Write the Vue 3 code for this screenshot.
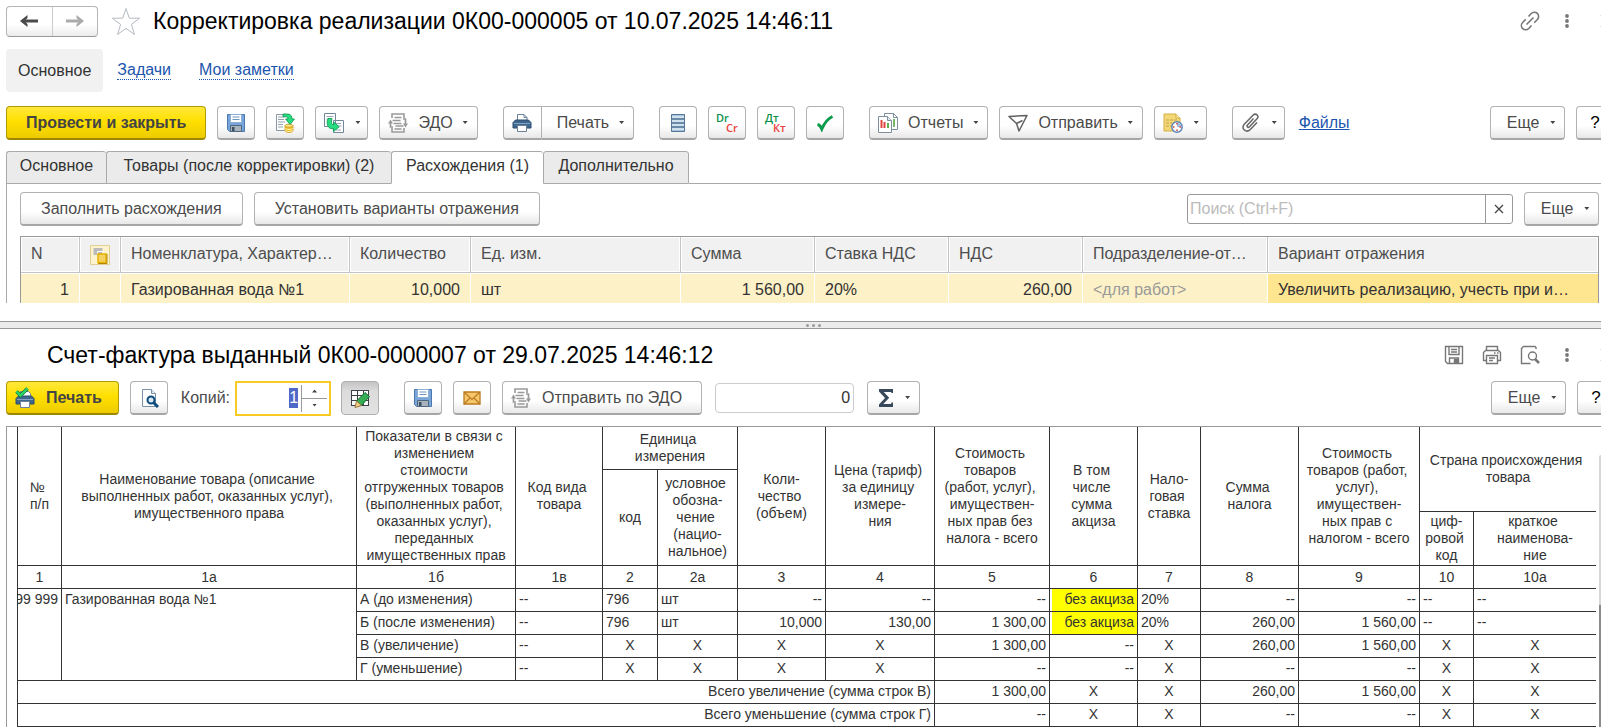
<script setup>
import { onMounted, ref } from 'vue'

const copies = ref('1')
const copiesInput = ref(null)
const search = ref('')
const sum = ref('0')

const tabs = ['Основное', 'Товары (после корректировки) (2)', 'Расхождения (1)', 'Дополнительно']
const activeTab = ref(2)

const numbers = ['1', '1а', '1б', '1в', '2', '2а', '3', '4', '5', '6', '7', '8', '9', '10', '10а']
const L = 'l', R = 'r', C = 'c'
const lines = [
  [['А (до изменения)', L], ['--', L], ['796', L], ['шт', L], ['--', R], ['--', R], ['--', R], ['без акциза', 'mark'], ['20%', L], ['--', R], ['--', R], ['--', L], ['--', L]],
  [['Б (после изменения)', L], ['--', L], ['796', L], ['шт', L], ['10,000', R], ['130,00', R], ['1 300,00', R], ['без акциза', 'mark'], ['20%', L], ['260,00', R], ['1 560,00', R], ['--', L], ['--', L]],
  [['В (увеличение)', L], ['--', L], ['X', C], ['X', C], ['X', C], ['X', C], ['1 300,00', R], ['--', R], ['X', C], ['260,00', R], ['1 560,00', R], ['X', C], ['X', C]],
  [['Г (уменьшение)', L], ['--', L], ['X', C], ['X', C], ['X', C], ['X', C], ['--', R], ['--', R], ['X', C], ['--', R], ['--', R], ['X', C], ['X', C]],
]
const totals = [
  ['Всего увеличение (сумма строк В)', [['1 300,00', R], ['X', C], ['X', C], ['260,00', R], ['1 560,00', R], ['X', C], ['X', C]]],
  ['Всего уменьшение (сумма строк Г)', [['--', R], ['X', C], ['X', C], ['--', R], ['--', R], ['X', C], ['X', C]]],
]

const head = {
  num: '№ \nп/п',
  name: 'Наименование товара (описание \nвыполненных работ, оказанных услуг), \nимущественного права',
  change: 'Показатели в связи с \nизменением \nстоимости \nотгруженных товаров \n(выполненных работ, \nоказанных услуг), \nпереданных \nимущественных прав',
  kind: 'Код вида \nтовара',
  unit: 'Единица \nизмерения',
  qty: 'Коли-\nчество \n(объем)',
  price: 'Цена (тариф) \nза единицу \nизмере-\nния',
  cost: 'Стоимость \nтоваров \n(работ, услуг), \nимуществен-\nных прав без \nналога - всего',
  excise: 'В том \nчисле \nсумма \nакциза',
  rate: 'Нало-\nговая \nставка',
  tax: 'Сумма \nналога',
  total: 'Стоимость \nтоваров (работ, \nуслуг), \nимуществен-\nных прав с \nналогом - всего',
  country: 'Страна происхождения \nтовара',
  code: 'код',
  symbol: 'условное \nобозна-\nчение \n(нацио-\nнальное)',
  digit: 'циф-\nровой \nкод',
  short: 'краткое \nнаименова-\nние',
}

function step(d) {
  copies.value = String(Math.max(1, Number(copies.value) + d))
}

onMounted(() => {
  copiesInput.value.focus()
  copiesInput.value.select()
})
</script>

<template>
  <div class="page">
    <svg class="defs" aria-hidden="true">
      <symbol id="i-floppy" viewBox="0 0 20 20">
        <path d="M1.5 1.5h17v17H3.5l-2-2z" fill="#79a5db" stroke="#4a77ac" />
        <path d="M4.5 1.5h11v8h-11z" fill="#fff" stroke="#8fb0d6" />
        <path d="M6.500 4h7M6.500 6.500h7" stroke="#6e94c0" />
        <path d="M4.500 12.500h11v6h-11z" fill="#a9b3bd" stroke="#50697f" />
        <path d="M6 14h2.500v4H6z" fill="#3c5063" />
      </symbol>
      <symbol id="i-post" viewBox="0 0 20 20">
        <path d="M1.500 1.500h13v16h-13z" fill="#fff" stroke="#8a98a6" />
        <path d="M3 4h6M3 6.500h6M3 9h7M3 11.500h5M3 14h5" stroke="#93a1ae" />
        <path d="M8 1h4.500c3 0 4.500 2 4.500 5h2.500L15 11.500 10.500 6H13c0-1.500-.8-2.200-2-2.200H8z" fill="#27dd7f" stroke="#079550" stroke-width=".8" />
        <path d="M10 12.500v5c0 2.500 8 2.500 8 0v-5z" fill="#f3c52c" stroke="#b9860c" stroke-width=".7" />
        <ellipse cx="14" cy="12.700" rx="4" ry="1.500" fill="#ffe98a" stroke="#b9860c" stroke-width=".7" />
        <path d="M10 15c0 2 8 2 8 0M10 17c0 2 8 2 8 0" fill="none" stroke="#fff0ae" />
      </symbol>
      <symbol id="i-base" viewBox="0 0 20 20">
        <path d="M.5.500h11v13H.5zM9.500 7.500h10v12h-10z" fill="#fff" stroke="#74869a" />
        <path d="M2.500 3.500h7M2.500 6h4M12 10.500h5M13 13h4.500M12 17h5" stroke="#9aaab8" />
        <path d="M4 5.500C2.500 9 3 13.500 6 15.200c1.300.6 2.500.7 3.700.5v2.800l5.500-4.700L9.700 9v2.700c-2 .3-2.700-2-1.700-6.200z" fill="#27dd7f" stroke="#079550" stroke-width=".8" />
      </symbol>
      <symbol id="i-edo" viewBox="0 0 20 20">
        <path d="M4 5V1h12v4M4 15v4h12v-4" fill="none" stroke="#9a9a9a" stroke-width="1.600" />
        <path d="M6.500 4.500h7M4.500 7.500h8M5.500 10.500h8M7.500 13h8M6.500 16h7" stroke="#9a9a9a" stroke-width="1.600" />
        <path d="M5 14H2.500v-4M15 6h2.500v5" fill="none" stroke="#9a9a9a" stroke-width="1.700" />
        <path d="M0 10.500l2.500-4 2.500 4zM15 10.500h5l-2.500 4z" fill="#9a9a9a" />
      </symbol>
      <symbol id="i-printer" viewBox="0 0 20 20">
        <path d="M5.500 8V1.500h6.500l3 3V8" fill="#fff" stroke="#6a8198" />
        <path d="M12 1.500v3h3" fill="none" stroke="#6a8198" />
        <path d="M3.500 7h13l2.500 2.500V15H1V9.500z" fill="#3f668c" stroke="#294c6d" />
        <path d="M2 10.500h16" stroke="#83a4c4" />
        <path d="M5.500 12.500h9v6h-9z" fill="#fff" stroke="#6a8198" />
      </symbol>
      <symbol id="i-dots" viewBox="0 0 4 14">
        <circle cx="2" cy="2" r="1.900" /><circle cx="2" cy="7" r="1.900" /><circle cx="2" cy="12" r="1.900" />
      </symbol>
      <symbol id="i-close" viewBox="0 0 14 14">
        <path d="M1 1l12 12M13 1L1 13" fill="none" stroke="#777" stroke-width="1.500" />
      </symbol>
    </svg>

    <header class="title-row">
      <div class="nav">
        <button aria-label="Назад"><svg width="18" height="12" viewBox="0 0 18 12"><path d="M2 6h16" stroke="#4a4a4a" stroke-width="3" /><path d="M7.500 0v3L4.500 6l3 3v3L0 6z" fill="#4a4a4a" /></svg></button>
        <button aria-label="Вперед"><svg width="18" height="12" viewBox="0 0 18 12"><path d="M0 6h16" stroke="#aaa" stroke-width="3" /><path d="M10.500 0v3l3 3-3 3v3L18 6z" fill="#aaa" /></svg></button>
      </div>
      <button class="plain star" aria-label="В избранное"><svg width="30" height="29" viewBox="0 0 30 29"><path d="M15 1.500l3.300 9.700h10.400l-8.300 6.200 3.100 10.100-8.500-6.100-8.500 6.100 3.100-10.100-8.300-6.200h10.400z" fill="#fff" stroke="#b4bac2" /></svg></button>
      <h1>Корректировка реализации 0К00-000005 от 10.07.2025 14:46:11</h1>
      <div class="window-tools">
        <button class="plain" aria-label="Ссылка"><svg width="20" height="20" viewBox="0 0 20 20" fill="none" stroke="#777" stroke-width="1.600"><path d="M8.500 5.500l2.700-3a4.300 4.300 0 0 1 6.200 6l-3.200 3.300M11.500 14.500l-2.700 3a4.300 4.300 0 0 1-6.200-6l3.200-3.300M6.500 13.500l7-7" /></svg></button>
        <button class="plain dots" aria-label="Меню"><svg width="4" height="14"><use href="#i-dots" /></svg></button>
        <button class="plain" aria-label="Закрыть"><svg width="14" height="14"><use href="#i-close" /></svg></button>
      </div>
    </header>

    <nav class="links">
      <span class="current">Основное</span>
      <a href="#tasks">Задачи</a>
      <a href="#notes">Мои заметки</a>
    </nav>

    <div class="bar">
      <div class="group">
        <button class="btn primary">Провести и закрыть</button>
        <button class="btn icon" aria-label="Записать"><svg width="20" height="20"><use href="#i-floppy" /></svg></button>
        <button class="btn icon" aria-label="Провести"><svg width="20" height="20"><use href="#i-post" /></svg></button>
        <button class="btn drop" aria-label="Создать на основании"><svg width="20" height="20"><use href="#i-base" /></svg><i class="caret"></i></button>
        <button class="btn drop wide"><svg width="20" height="20"><use href="#i-edo" /></svg><span>ЭДО</span><i class="caret"></i></button>
      </div>
      <div class="group joined">
        <button class="btn icon" aria-label="Печать сразу"><svg width="20" height="20"><use href="#i-printer" /></svg></button>
        <button class="btn text-drop"><span>Печать</span><i class="caret"></i></button>
      </div>
      <div class="group">
        <button class="btn icon" aria-label="Журнал"><svg width="14" height="20" viewBox="0 0 14 20"><path d="M.5 1.500h13v17H.5z" fill="#a8c4dc" stroke="#557795" /><path d="M1 4h12M1 8h12M1 12h12M1 16h12" stroke="#dce9f4" stroke-width="1.500" /><path d="M0 6h14M0 10h14M0 14h14" stroke="#557795" stroke-width="1.500" /></svg></button>
        <button class="btn icon" aria-label="Dr Cr"><svg class="ledger" width="24" height="24"><text x="1" y="11" fill="#0a9048">Dr</text><text x="11" y="21" fill="#e8403c">Cr</text></svg></button>
        <button class="btn icon" aria-label="Дт Кт"><svg class="ledger" width="24" height="24"><text x="1" y="11" fill="#0a9048">Дт</text><text x="9" y="21" fill="#e8403c">Кт</text></svg></button>
        <button class="btn icon" aria-label="Проверить"><svg width="18" height="18" viewBox="0 0 18 18"><path d="M1.500 10.500C4 11 5 13 5.800 15 8 10 12 4.500 16.500 2.500" fill="none" stroke="#0b9a4b" stroke-width="3" /></svg></button>
      </div>
      <div class="group">
        <button class="btn drop wide">
          <svg width="20" height="20" viewBox="0 0 20 20"><path d="M6.500.500h9l4 4v12h-13z" fill="#fff" stroke="#7d8f9f" /><path d="M15.500.500v4h4" fill="none" stroke="#7d8f9f" /><path d="M16 6v8" stroke="#79b86b" stroke-width="2" /><path d="M.5 3.500h9l4 4v12H.5z" fill="#fff" stroke="#7d8f9f" /><path d="M9.500 3.500v4h4" fill="#dfe6ec" stroke="#7d8f9f" /><path d="M3.500 7v8" stroke="#e0453d" stroke-width="2" /><path d="M6.500 9v6" stroke="#e0453d" stroke-width="2" /><path d="M10 10v5" stroke="#5eb04c" stroke-width="2" /></svg>
          <span>Отчеты</span><i class="caret"></i>
        </button>
        <button class="btn drop wide">
          <svg width="20" height="20" viewBox="0 0 20 20"><path d="M1 3.500l18-1L11 18l-2.500-7.500zM8.500 10.500l6-3" fill="none" stroke="#606060" stroke-width="1.500" stroke-linejoin="round" /></svg>
          <span>Отправить</span><i class="caret"></i>
        </button>
        <button class="btn drop" aria-label="Задачи">
          <svg width="20" height="20" viewBox="0 0 20 20"><path d="M1 1h12l4 4v13H1z" fill="#f3d877" stroke="#d2ad42" /><path d="M13 1v4h4" fill="#fff0b8" stroke="#d2ad42" /><path d="M3 7h11M3 10h6M3 13h5" stroke="#c6a345" stroke-dasharray="3 1" /><circle cx="14" cy="14" r="5.200" fill="#fff" stroke="#5a85b7" stroke-width="1.500" /><path d="M14 14V9.800A4.200 4.200 0 0 1 18.200 14z" fill="#9dc0e4" /><path d="M14 10v1.500M14 16.500V18M10 14h1.500M16.500 14H18" stroke="#d8403a" stroke-width="1.500" /></svg><i class="caret"></i>
        </button>
      </div>
      <div class="group files">
        <button class="btn drop" aria-label="Присоединенные файлы">
          <svg width="20" height="20" viewBox="0 0 20 20"><path d="M12.500 5.500l-6 6.500c-1.300 1.500.6 3.200 2 1.800l7.500-8c2.600-3-1.200-6.300-4-3.500L3.500 11c-4 4.500 1.700 9.500 5.800 5.500l6.700-7" fill="none" stroke="#666" stroke-width="1.500" /></svg><i class="caret"></i>
        </button>
        <a href="#files">Файлы</a>
      </div>
      <div class="group end">
        <button class="btn more"><span>Еще</span><i class="caret"></i></button>
        <button class="btn icon help">?</button>
      </div>
    </div>

    <div class="tabs" role="tablist">
      <button v-for="(t, i) in tabs" :key="t" role="tab" :aria-selected="i === activeTab" :class="['t' + i, { active: i === activeTab }]" @click="activeTab = i">{{ t }}</button>
      <div class="rest"></div>
    </div>

    <section class="panel">
      <div class="panel-bar">
        <button class="btn label">Заполнить расхождения</button>
        <button class="btn label">Установить варианты отражения</button>
        <div class="search">
          <input v-model="search" type="text" aria-label="Поиск" placeholder="Поиск (Ctrl+F)">
          <button aria-label="Очистить" @click="search = ''"><svg width="10" height="10" viewBox="0 0 10 10"><path d="M1 1l8 8M9 1L1 9" stroke="#444" stroke-width="1.300" /></svg></button>
        </div>
        <button class="btn more"><span>Еще</span><i class="caret"></i></button>
      </div>
      <table class="grid">
        <colgroup><col class="g1"><col class="g2"><col class="g3"><col class="g4"><col class="g5"><col class="g6"><col class="g6"><col class="g6"><col class="g7"><col></colgroup>
        <thead>
          <tr>
            <th>N</th>
            <th class="pic"><svg width="20" height="20" viewBox="0 0 20 20" aria-label="Состояние"><path d="M.5.500h19v19H.5z" fill="#fdf3cf" stroke="#e0cf94" /><path d="M3.500 3h9v7h-9z" fill="#bbb" /><path d="M7.500 9V6.500H13V9" fill="none" stroke="#fff" /><path d="M8 9h8v8.500H8z" fill="#f3d162" stroke="#e8b400" stroke-width="1.500" /><path d="M8 18.500h9V9" fill="none" stroke="#b28700" /></svg></th>
            <th>Номенклатура, Характер…</th>
            <th>Количество</th><th>Ед. изм.</th><th>Сумма</th><th>Ставка НДС</th><th>НДС</th>
            <th>Подразделение-от…</th><th>Вариант отражения</th>
          </tr>
        </thead>
        <tbody>
          <tr>
            <td class="r">1</td><td></td><td>Газированная вода №1</td><td class="r">10,000</td><td>шт</td>
            <td class="r">1 560,00</td><td>20%</td><td class="r">260,00</td><td class="hint">&lt;для работ&gt;</td>
            <td class="sel">Увеличить реализацию, учесть при и…</td>
          </tr>
        </tbody>
      </table>
    </section>

    <div class="splitter"><i></i><i></i><i></i></div>

    <header class="title-row second">
      <h1>Счет-фактура выданный 0К00-0000007 от 29.07.2025 14:46:12</h1>
      <div class="window-tools">
        <button class="plain" aria-label="Сохранить"><svg width="20" height="20" viewBox="0 0 20 20" fill="none" stroke="#777" stroke-width="1.400"><path d="M1.500 1.500h17v17h-15l-2-2zM5 1.500v8h10v-8M7 4.500h6M7 7h6M5.500 18.500V13h9v5.500" /><path d="M10.500 14.500h3v3.500h-3z" fill="#777" /></svg></button>
        <button class="plain" aria-label="Печать"><svg width="20" height="20" viewBox="0 0 20 20" fill="none" stroke="#777" stroke-width="1.400"><path d="M4.500 5.500v-4h11v4M4.500 15.500h-3v-8l2-2h13l2 2v8h-3M4.500 10.500h11v8h-11zM7 13h6M7 15.500h4M12 8h1.500M15 8h1.500" /></svg></button>
        <button class="plain" aria-label="Просмотр"><svg width="20" height="20" viewBox="0 0 20 20" fill="none" stroke="#777" stroke-width="1.400"><path d="M16 4V2.500l-1-1H3.500l-2 2v15h9" /><circle cx="12.500" cy="11" r="4" /><path d="M15 14l4 4" stroke-width="2.500" /></svg></button>
        <button class="plain dots" aria-label="Меню"><svg width="4" height="14"><use href="#i-dots" /></svg></button>
        <button class="plain" aria-label="Закрыть"><svg width="14" height="14"><use href="#i-close" /></svg></button>
      </div>
    </header>

    <div class="bar lower">
      <div class="group">
        <button class="btn primary print">
          <svg width="20" height="22" viewBox="0 0 20 22"><path d="M5.500 10V4.500h8l2 2V10" fill="#fff" stroke="#6a8198" /><path d="M3.500 9h13l2.500 2.500V17H1v-5.500z" fill="#3f668c" stroke="#294c6d" /><path d="M2 12.500h16" stroke="#83a4c4" /><path d="M5.500 14.500h9v6h-9z" fill="#fff" stroke="#6a8198" /><path d="M1.500 4.500L5.500 8.500 12.500 1.500" fill="none" stroke="#13813c" stroke-width="3.600" /><path d="M1.500 4.500L5.500 8.500 12.500 1.500" fill="none" stroke="#2ed86b" stroke-width="2" /></svg>
          <span>Печать</span>
        </button>
        <button class="btn icon" aria-label="Предварительный просмотр"><svg width="20" height="20" viewBox="0 0 20 20"><path d="M3.500 1.500h9l4 4v13h-13z" fill="#fff" stroke="#7891a8" /><path d="M12.500 1.500v4h4" fill="#e4edf5" stroke="#7891a8" /><circle cx="12" cy="12" r="3.500" fill="#d8e8f5" stroke="#0e4a7b" stroke-width="2" /><path d="M14.500 14.500l4.500 4.500" stroke="#0e4a7b" stroke-width="3" /></svg></button>
      </div>
      <label class="copies-label" for="copies">Копий:</label>
      <div class="spin">
        <input id="copies" ref="copiesInput" v-model="copies" type="text">
        <div class="steps">
          <button aria-label="Больше" @click="step(1)"><i class="tri up"></i></button>
          <button aria-label="Меньше" @click="step(-1)"><i class="tri"></i></button>
        </div>
      </div>
      <button class="btn icon pressed" aria-label="Редактирование" aria-pressed="true"><svg width="20" height="20" viewBox="0 0 20 20"><path d="M1 2.500h18v15H1z" fill="#fff" /><path d="M1 2.500h18M1 7.500h18M1 12.500h18M1 17.500h18M1.500 2v16M7.500 2v16M13.500 2v16M18.500 2v16" stroke="#3c4248" /><path d="M15 4.500l4.500 4-8 9-5-4.500z" fill="#35ad55" stroke="#176c32" /><path d="M6.500 13l5 4.500-6.500 2z" fill="#f4d08c" stroke="#9d7736" /></svg></button>
      <div class="group apart">
        <button class="btn icon" aria-label="Сохранить на диск"><svg width="20" height="20"><use href="#i-floppy" /></svg></button>
        <button class="btn icon" aria-label="Отправить по почте"><svg width="18" height="14" viewBox="0 0 18 14"><path d="M1 1h16v12H1z" fill="#f6c66b" stroke="#ba7a1e" stroke-width="1.300" /><path d="M1 13l6-6M17 13l-6-6M1 1l8 7.500L17 1" fill="none" stroke="#ba7a1e" stroke-width="1.200" /></svg></button>
        <button class="btn edo"><svg width="20" height="20"><use href="#i-edo" /></svg><span>Отправить по ЭДО</span></button>
      </div>
      <input class="sum" v-model="sum" type="text" aria-label="Сумма выделенных ячеек">
      <button class="btn drop" aria-label="Функция"><svg width="16" height="20" viewBox="0 0 16 20"><path d="M1 1h14v4h-1.500l-.5-1H5.800l5.400 5.700L5.300 16H13l.6-1.500H15V19H1v-2.500l6-6.500L1 3.500z" fill="#38495c" /></svg><i class="caret"></i></button>
      <div class="group end">
        <button class="btn more"><span>Еще</span><i class="caret"></i></button>
        <button class="btn icon help">?</button>
      </div>
    </div>

    <section class="report">
      <table>
        <colgroup><col v-for="n in 15" :key="n" :class="'c' + n"></colgroup>
        <thead>
          <tr class="h1">
            <th rowspan="3">{{ head.num }}</th><th rowspan="3">{{ head.name }}</th><th rowspan="3">{{ head.change }}</th>
            <th rowspan="3">{{ head.kind }}</th><th colspan="2">{{ head.unit }}</th><th rowspan="3">{{ head.qty }}</th>
            <th rowspan="3">{{ head.price }}</th><th rowspan="3">{{ head.cost }}</th><th rowspan="3">{{ head.excise }}</th>
            <th rowspan="3">{{ head.rate }}</th><th rowspan="3">{{ head.tax }}</th><th rowspan="3">{{ head.total }}</th>
            <th colspan="2" rowspan="2">{{ head.country }}</th>
          </tr>
          <tr class="h2"><th rowspan="2">{{ head.code }}</th><th rowspan="2">{{ head.symbol }}</th></tr>
          <tr class="h3"><th>{{ head.digit }}</th><th>{{ head.short }}</th></tr>
          <tr class="nums"><th v-for="n in numbers" :key="n">{{ n }}</th></tr>
        </thead>
        <tbody>
          <tr v-for="(line, i) in lines" :key="i">
            <td v-if="i === 0" rowspan="4" class="top"><div class="clip">99 999</div></td>
            <td v-if="i === 0" rowspan="4" class="top">Газированная вода №1</td>
            <td v-for="(cell, j) in line" :key="j" :class="cell[1]">{{ cell[0] }}</td>
          </tr>
          <tr v-for="row in totals" :key="row[0]">
            <td colspan="8" class="r">{{ row[0] }}</td>
            <td v-for="(cell, j) in row[1]" :key="j" :class="cell[1]">{{ cell[0] }}</td>
          </tr>
        </tbody>
      </table>
      <div class="scroll"><i></i></div>
    </section>
  </div>
</template>

<style>
body { background: #fff; overflow: hidden; }
</style>

<style scoped>
.page, .page * { box-sizing: border-box; }
.page { font: 16px/20px "Liberation Sans", Arial, sans-serif; color: #333; overflow: hidden; padding-top: 6px; }
button, input { font: inherit; color: inherit; margin: 0; }
button { padding: 0; cursor: pointer; }
.defs { position: absolute; width: 0; height: 0; }
svg { display: block; flex: none; }
a { color: #1c55ae; }

.title-row { display: flex; align-items: center; height: 30px; padding-left: 6px; }
h1 { margin: 0; font-size: 23px; line-height: 28px; font-weight: 400; color: #000; white-space: nowrap; }
.nav { display: flex; width: 92px; height: 31px; border: 1px solid #b5b5b5; border-bottom-color: #999; border-radius: 4px; background: linear-gradient(#fff 60%, #ececec); }
.nav button { flex: 1; display: flex; align-items: center; justify-content: center; border: 0; background: none; }
.nav button + button { border-left: 1px solid #ccc; }
.plain { border: 0; background: none; display: flex; }
.star { margin: 0 12px 0 13px; }
.window-tools { display: flex; align-items: center; margin-left: auto; margin-right: -13px; fill: #777; }
.window-tools .plain + .plain { margin-left: 18px; }
.window-tools .plain.dots { margin-left: 25px; margin-right: 13px; }
.second { padding-left: 47px; margin-top: 11px; }

.links { display: flex; align-items: center; margin: 13px 6px 0; height: 43px; gap: 28px; }
.links .current { background: #f1f1f1; border-radius: 4px; height: 43px; line-height: 43px; padding: 0 12px; margin-right: -14px; }
.links a { text-decoration: none; border-bottom: 1px dotted #1c55ae; line-height: 18px; }

.bar { display: flex; align-items: center; margin-top: 14px; padding-left: 6px; margin-right: -13px; gap: 25px; height: 34px; }
.group { display: flex; align-items: center; gap: 11px; }
.end { margin-left: auto; }
.btn { height: 34px; display: flex; align-items: center; justify-content: center; border: 1px solid #b2b2b2; border-bottom: 2px solid #a6a6a6; border-radius: 4px; background: linear-gradient(#fff 60%, #e8e8e8); color: #4a4a4a; white-space: nowrap; flex: none; }
.icon { width: 38px; }
.primary { padding: 0 19px; font-weight: 700; background: linear-gradient(#ffe83c, #ffe000 45%, #edcb00); border-color: #b29b00; border-bottom-color: #9b8700; color: #444; }
.caret { display: block; width: 5px; height: 3px; background: #444; clip-path: polygon(0 0, 100% 0, 50% 100%); flex: none; }
.drop { width: 53px; gap: 11px; padding-left: 1px; }
.drop.wide { width: auto; padding: 0 9px 0 8px; gap: 10px; }
.joined { gap: 0; }
.joined .icon { border-radius: 4px 0 0 4px; border-right: 0; width: 38px; }
.text-drop { border-radius: 0 4px 4px 0; padding: 0 9px 0 15px; gap: 10px; }
.ledger { font: 600 11px "Open Sans", "Noto Sans", sans-serif; }
.files { gap: 14px; }
.more { width: 75px; gap: 11px; padding-left: 7px; }
.help { color: #000; font-size: 17px; }

.tabs { display: flex; margin: 11px 0 0 6px; height: 33px; color: #333; }
.tabs button { border: 1px solid #aaa; border-right: 0; background: #ebebeb; padding: 0 0 3px; border-radius: 3px 3px 0 0; }
.tabs button:nth-last-child(2) { border-right: 1px solid #aaa; }
.tabs button.active { background: #fff; border-bottom-color: #fff; }
.t0 { width: 100px; } .t1 { width: 285px; } .t2 { width: 152px; } .t3 { width: 146px; }
.rest { flex: 1; border-bottom: 1px solid #aaa; }
.panel { margin-left: 6px; border-left: 1px solid #aaa; padding: 8px 2px 0 13px; height: 119px; overflow: hidden; }
.panel-bar { display: flex; align-items: center; gap: 11px; }
.label { padding: 0 20px; }
.search { display: flex; width: 326px; height: 30px; margin-left: auto; border: 1px solid #999; border-radius: 3px; }
.search input { flex: 1; min-width: 0; border: 0; padding: 0 2px; outline: 0; background: none; }
.search input::placeholder { color: #bbb; opacity: 1; }
.search button { width: 27px; border: 0; border-left: 1px solid #999; background: none; display: flex; align-items: center; justify-content: center; }

.grid { width: 100%; margin-top: 10px; table-layout: fixed; border-collapse: separate; border-spacing: 0; border: 1px solid #999; border-bottom: 0; }
.g1 { width: 59px; } .g2 { width: 41px; } .g3 { width: 229px; } .g4 { width: 121px; } .g5 { width: 210px; } .g6 { width: 134px; } .g7 { width: 185px; }
.grid th, .grid td { padding: 0 10px; text-align: left; font-weight: 400; overflow: hidden; white-space: nowrap; text-overflow: ellipsis; border-right: 1px solid #fff; }
.grid th { height: 36px; padding-bottom: 2px; background: #f1f1f1; color: #4d4d4d; border-right-color: #c4c4c4; border-bottom: 1px solid #c4c4c4; box-shadow: inset 0 0 0 1px #fff; }
.grid th:last-child, .grid td:last-child { border-right: 0; }
.grid td { height: 33px; background: #fdf1c7; color: #333; border-top: 1px solid #fff; }
.grid .pic { padding-bottom: 0; }
.grid .pic svg { margin: 0 auto; }
.grid .r { text-align: right; }
.grid .hint { color: #999; }
.grid .sel { background: #fee590; }

.splitter { margin-top: 18px; height: 8px; border: solid #999; border-width: 1px 0; background: #ececec; display: flex; align-items: center; justify-content: center; gap: 3px; padding-left: 26px; }
.splitter i { width: 3px; height: 3px; border-radius: 50%; background: #999; }

.lower { margin-top: 11px; gap: 0; margin-right: -14px; }
.print { padding: 0 16px 0 8px; gap: 11px; }
.copies-label { margin-left: 13px; margin-right: 5px; color: #4a4a4a; }
.spin { display: flex; width: 96px; height: 35px; border: 2px solid #f7cb23; margin-right: 10px; padding: 2px; }
.spin input { flex: 1; min-width: 0; border: 0; outline: 0; padding: 0 3px 0 0; text-align: right; background: none; }
.spin input::selection { background: #5068c8; color: #fff; }
.steps { width: 26px; display: flex; flex-direction: column; border-left: 1px solid #999; }
.steps button { flex: 1; border: 0; background: none; display: flex; align-items: center; justify-content: center; }
.steps button + button { border-top: 1px solid #999; }
.tri { width: 5px; height: 3px; background: #444; clip-path: polygon(0 0, 100% 0, 50% 100%); }
.tri.up { clip-path: polygon(50% 0, 100% 100%, 0 100%); }
.pressed { background: linear-gradient(#c4c4c4, #dcdcdc 30%, #e2e2e2); border: 1px solid #b0b0b0; }
.apart { margin-left: 25px; }
.edo { padding: 0 19px 0 8px; gap: 11px; }
.sum { width: 139px; height: 30px; margin: 0 13px; border: 1px solid #ccc; border-radius: 4px; text-align: right; padding: 0 3px; }

.report { display: flex; margin: 11px 0 0 6px; border: solid #999; border-width: 1px 0 0 1px; padding-left: 10px; position: relative; }
.report table { flex: 1; margin-right: 5px; table-layout: fixed; width: 0; border-collapse: separate; border-spacing: 0; border-left: 1px solid #333; font-size: 14px; line-height: 17px; color: #333; }
.c1 { width: 44px; } .c2 { width: 295px; } .c3 { width: 159px; } .c4 { width: 87px; } .c5 { width: 55px; } .c6 { width: 80px; } .c7 { width: 88px; } .c8 { width: 109px; } .c9 { width: 115px; } .c10 { width: 88px; } .c11 { width: 63px; } .c12 { width: 98px; } .c13 { width: 121px; } .c14 { width: 54px; }
.report th, .report td { border-right: 1px solid #333; border-bottom: 1px solid #333; padding: 0 3px; font-weight: 400; }
.report th { white-space: pre; padding: 0; text-align: center; }
.report tr > :last-child { border-right: 0; }
.report tr.h2 > :last-child { border-right: 1px solid #333; }
.report .h1 { height: 43px; } .report .h2 { height: 42px; } .report .h3 { height: 54px; } .report .nums { height: 23px; }
.report tbody tr { height: 23px; }
.report td { padding-bottom: 2px; white-space: nowrap; text-align: left; }
.report td.top { vertical-align: top; padding-top: 2px; }
.report td.r, .report td.mark { text-align: right; }
.report td.c { text-align: center; }
.report td.mark { background: linear-gradient(#ff0, #ff0) no-repeat 2px 0; }
.clip { display: flex; justify-content: flex-end; overflow: hidden; margin-left: -3px; }
.scroll { position: absolute; right: 0; top: 28px; bottom: 0; width: 2px; background: #d6d6d6; border-radius: 2px 0 0 0; }
.scroll i { position: absolute; left: 0; right: 0; top: 150px; bottom: 0; background: #8c8c8c; }
</style>
